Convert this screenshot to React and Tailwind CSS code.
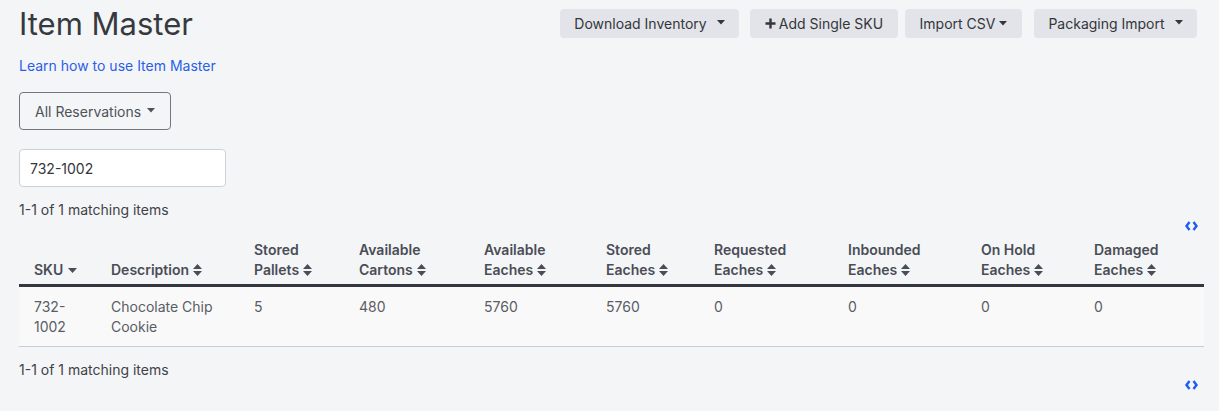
import React from "react";

const Caret = () => (
  <svg width="8" height="5" viewBox="0 0 8 5" className="inline-block ml-[10px] mb-[2px]">
    <path d="M0 0 L8 0 L4 4.5 Z" fill="currentColor" />
  </svg>
);

const SortBoth = () => (
  <svg width="9" height="12" viewBox="0 0 9 12" className="inline-block ml-[4px] mb-[2px]">
    <path d="M0 5 L9 5 L4.5 0 Z M0 7 L9 7 L4.5 12 Z" fill="currentColor" />
  </svg>
);

const SortDown = () => (
  <svg width="9" height="5" viewBox="0 0 9 5" className="inline-block ml-[5px] mb-[1px]">
    <path d="M0 0 L9 0 L4.5 5 Z" fill="currentColor" />
  </svg>
);

const Code = () => (
  <svg width="13" height="10" viewBox="0 0 13 10" className="block">
    <path d="M4.5 1 L1.5 5 L4.5 9 M8.5 1 L11.5 5 L8.5 9" fill="none" stroke="#1d5cf5" strokeWidth="2.4" strokeLinejoin="miter" />
  </svg>
);

const cols = [
  { w: 77, h: ["SKU"], sort: "down", v: ["732-", "1002"] },
  { w: 143, h: ["Description"], v: ["Chocolate Chip", "Cookie"] },
  { w: 105, h: ["Stored", "Pallets"], v: ["5"] },
  { w: 125, h: ["Available", "Cartons"], v: ["480"] },
  { w: 122, h: ["Available", "Eaches"], v: ["5760"] },
  { w: 108, h: ["Stored", "Eaches"], v: ["5760"] },
  { w: 134, h: ["Requested", "Eaches"], v: ["0"] },
  { w: 133, h: ["Inbounded", "Eaches"], v: ["0"] },
  { w: 113, h: ["On Hold", "Eaches"], v: ["0"] },
  { w: 125, h: ["Damaged", "Eaches"], v: ["0"] },
];

const Btn = ({ children, w }) => (
  <button
    className="h-[29px] px-[14px] rounded-[4px] bg-[#e2e4e9] text-[#33363b] text-[14px] flex items-center justify-center whitespace-nowrap"
    style={{ width: w }}
  >
    {children}
  </button>
);

export default function App() {
  return (
    <div className="min-h-[411px] bg-[#f4f5f7] px-[19px] text-[14px] text-[#44474d]" style={{ fontFamily: "Inter, 'Noto Sans', sans-serif" }}>
      <div className="flex justify-between items-start">
        <h1 className="text-[31px] leading-[40px] mt-[4px] text-[#363a40] font-normal">Item Master</h1>
        <div className="flex mt-[9px] mr-[3px]">
          <Btn w={179}>
            Download Inventory <Caret />
          </Btn>
          <div className="ml-[11px]">
            <Btn w={148}>
              <svg width="11" height="11" viewBox="0 0 11 11" className="mr-[3px]">
                <path d="M5.5 0.5 V10.5 M0.5 5.5 H10.5" stroke="#33363b" strokeWidth="2.4" />
              </svg>
              Add Single SKU
            </Btn>
          </div>
          <div className="ml-[7px]">
            <Btn w={117}>
              Import CSV
              <svg width="8" height="5" viewBox="0 0 8 5" className="inline-block ml-[4px] mb-[1px]">
                <path d="M0 0 L8 0 L4 4.5 Z" fill="currentColor" />
              </svg>
            </Btn>
          </div>
          <div className="ml-[12px]">
            <Btn w={163}>
              Packaging Import <Caret />
            </Btn>
          </div>
        </div>
      </div>
      <a className="block mt-[12px] leading-[20px] text-[#2b5ee8]">Learn how to use Item Master</a>
      <button className="mt-[16px] h-[38px] w-[152px] border border-[#71767f] rounded-[4px] pl-[15px] text-left text-[#4e5259] flex items-center">
        All Reservations
        <svg width="8" height="5" viewBox="0 0 8 5" className="inline-block ml-[6px] mb-[1px]">
          <path d="M0 0 L8 0 L4 4.5 Z" fill="currentColor" />
        </svg>
      </button>
      <div className="mt-[19px] h-[38px] w-[207px] bg-white border border-[#ced2d8] rounded-[4px] pl-[10px] flex items-center text-[#33363b]">
        732-1002
      </div>
      <div className="mt-[13px] leading-[20px] text-[#3f4247]">1-1 of 1 matching items</div>
      <div className="flex justify-end mt-[1px] pr-[2px]">
        <Code />
      </div>
      <table className="table-fixed border-collapse w-[1185px] mt-[5px]">
        <colgroup>
          {cols.map((c, i) => (
            <col key={i} style={{ width: c.w }} />
          ))}
        </colgroup>
        <thead>
          <tr className="border-b-[3px] border-[#34373f]">
            {cols.map((c, i) => (
              <th key={i} className="text-left align-bottom font-semibold text-[#4a4d55] leading-[20px] pl-[15px] pr-[4px] pt-[4px] pb-[4px]">
                {c.h.length === 2 ? (
                  <>
                    <div>{c.h[0]}</div>
                    <div className="whitespace-nowrap">
                      {c.h[1]}
                      <SortBoth />
                    </div>
                  </>
                ) : (
                  <div className="whitespace-nowrap">
                    {c.h[0]}
                    {c.sort === "down" ? <SortDown /> : <SortBoth />}
                  </div>
                )}
              </th>
            ))}
          </tr>
        </thead>
        <tbody>
          <tr className="bg-[#f9f9fa] border-b border-[#c9ccd3]">
            {cols.map((c, i) => (
              <td key={i} className="align-top pl-[15px] pr-[4px] pt-[10px] pb-[9px] leading-[20px] text-[#5a5d64]">
                {c.v.map((t, j) => (
                  <div key={j}>{t}</div>
                ))}
              </td>
            ))}
          </tr>
        </tbody>
      </table>
      <div className="mt-[13px] leading-[20px] text-[#3f4247]">1-1 of 1 matching items</div>
      <div className="flex justify-end mt-0 pr-[2px] pb-[20px]">
        <Code />
      </div>
    </div>
  );
}
